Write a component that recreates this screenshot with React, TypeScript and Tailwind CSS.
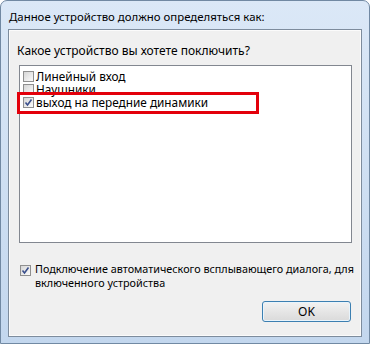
import React from "react";

const font = { fontFamily: '"Noto Sans", "Liberation Sans", sans-serif' };

const Box = ({ checked }: { checked?: boolean }) => (
  <span className="flex h-[11px] w-[11px] shrink-0 items-center justify-center border border-[#8f8f8f] bg-gradient-to-br from-[#d6d6d6] to-[#fbfbfb]">
    {checked && (
      <svg width="9" height="9" viewBox="0 0 9 9">
        <path d="M1.5 4.5 L3.5 7 L7.5 1.5" fill="none" stroke="#3a4f8c" strokeWidth="1.6" />
      </svg>
    )}
  </span>
);

const items = [
  { label: "Линейный вход", checked: false },
  { label: "Наушники", checked: false },
  { label: "выход на передние динамики", checked: true },
];

export default function App() {
  return (
    <div
      style={font}
      className="flex h-[344px] w-[370px] flex-col rounded-t-[7px] border border-[#7189a3] bg-gradient-to-b from-[#dbe8f7] to-[#c3d7ee] px-[7px] pb-[6px] text-[11.4px] text-black"
    >
      <div className="flex h-[28px] items-center pl-[1px] pt-[4px] leading-none">
        Данное устройство должно определяться как:
      </div>

      <div className="flex flex-1 flex-col border border-[#7d8c9d] bg-[#f0f0f0] shadow-[inset_0_0_0_1px_#fbfbfb]">
        <div className="pl-[8px] pt-[13px] text-[12px] leading-[16px]">
          Какое устройство вы хотете поключить?
        </div>

        <div className="relative ml-[10px] mt-[6px] h-[178px] w-[333px] border border-[#828790] bg-white pl-[3px] pt-[4px]">
          {items.map((it) => (
            <div key={it.label} className="flex h-[13px] items-center gap-[2px] leading-[13px]">
              <Box checked={it.checked} />
              <span className="text-[11.8px]">{it.label}</span>
            </div>
          ))}
          <div className="absolute left-[-3px] top-[26px] h-[22px] w-[242px] border-[3px] border-[#e3000b]" />
        </div>

        <div className="ml-[11px] mt-[19px] flex gap-[4px]">
          <div className="pt-[3px]">
            <Box checked />
          </div>
          <div className="whitespace-nowrap text-[10.8px] leading-[14px]">
            Подключение автоматического всплывающего диалога, для
            <br />
            включенного устройства
          </div>
        </div>

        <div className="mt-[11px] flex justify-end pr-[10px]">
          <button className="h-[21px] w-[89px] rounded-[3px] border border-[#3c7fb1] bg-gradient-to-b from-[#f2f2f2] to-[#dadada] text-[12px] leading-none shadow-[inset_0_0_0_1px_#e8f4fc]">
            OK
          </button>
        </div>
      </div>
    </div>
  );
}
